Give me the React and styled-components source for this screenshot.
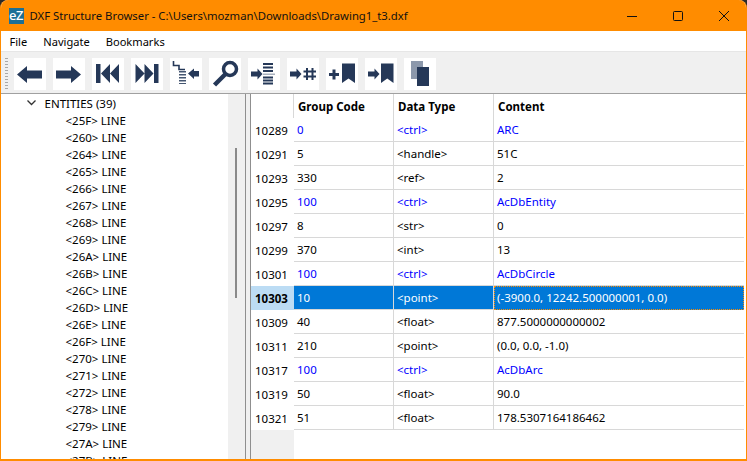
import React from 'react';
import styled, { createGlobalStyle } from 'styled-components';

const Global = createGlobalStyle`
  html, body { margin: 0; padding: 0; background: #2a2a2a; overflow: hidden; }
  #root { width: 747px; height: 461px; }
`;
const Win = styled.div`
  width: 747px; height: 461px; box-sizing: border-box; display: flex; flex-direction: column;
  background: #f0f0f0; border: solid #ff8c00; border-width: 0 1.5px 2px 1.5px; border-radius: 8px 8px 0 0;
  overflow: hidden; font-family: "Noto Sans", "Open Sans", sans-serif; font-size: 11.5px; color: #000;
`;
const TitleBar = styled.div`
  height: 31px; flex: none; background: #ff8c00; display: flex; align-items: center; padding: 0 1px 0 8px; margin: 0 -1.5px;
`;
const Logo = styled.div`
  width: 15px; height: 16px; background: #1c6f95; color: #fff; font-size: 13px; font-weight: 500; line-height: 15px;
  text-align: center; letter-spacing: -0.5px; margin-right: 6px; margin-left: 1px;
`;
const TitleText = styled.div` font-size: 11.3px; flex: 1; white-space: nowrap; color: #111; `;
const WinBtn = styled.div`
  width: 46px; height: 31px; display: flex; align-items: center; justify-content: center;
`;
const MenuBar = styled.div`
  height: 20px; flex: none; background: #fff; display: flex; align-items: center; padding-left: 8.5px; gap: 16px;
  border-bottom: 1px solid #e6e6e6;
`;
const MenuItem = styled.span` font-size: 11.1px; `;
const ToolBar = styled.div`
  height: 42px; flex: none; box-sizing: border-box; display: flex; align-items: center; padding: 2px 0 0 3.5px; gap: 7px;
  border-bottom: 1px solid #a0a0a0;
`;
const Grip = styled.div`
  width: 3px; height: 32px; margin-right: -1px;
  background-image: linear-gradient(#a8a8a8 50%, transparent 50%);
  background-size: 3px 3px;
`;
const ToolBtn = styled.div`
  width: 32px; height: 32px; background: #fff; flex: none;
  svg { display: block; }
`;
const Panes = styled.div` flex: 1; display: flex; min-height: 0; background: #f0f0f0; `;
const TreePane = styled.div`
  width: 243.5px; flex: none; display: flex; background: #fff; overflow: hidden; border-right: 1px solid #8f8f8f;
`;
const TreeList = styled.div` flex: 1; `;
const TreeRow = styled.div`
  height: 17px; display: flex; align-items: center; white-space: nowrap;
  padding-left: ${p => p.$indent}px;
  &:first-child { height: 18px; }
`;
const Chevron = styled.svg` width: 9px; height: 6px; margin-left: -18px; margin-right: 9px; `;
const TreeScroll = styled.div`
  width: 17px; flex: none; background: #f0f0f0; display: flex; justify-content: center;
`;
const Thumb = styled.div` width: 2px; height: 150px; margin-top: 54px; background: #8a8a8a; `;
const TablePane = styled.div`
  flex: 1; margin-left: 4.5px; background: #fff; border-left: 1px solid #8f8f8f; display: flex; flex-direction: column;
  overflow: hidden; padding-right: 2.5px;
`;
const Row = styled.div`
  display: grid; grid-template-columns: 43px 100px 100px 1fr; height: 24px; flex: none;
`;
const Head = styled.div`
  font-weight: 700; font-size: 11.5px; display: flex; align-items: center; padding-left: 4px;
  border-right: 1px solid #d8d8d8; background: #fff; white-space: nowrap; &:last-child { border-right: 0; }
`;
const RowHead = styled.div`
  display: flex; align-items: center; padding-left: 4px; padding-top: 1px; white-space: nowrap;
  background: ${p => p.$sel ? '#bcdcf4' : '#fff'}; font-weight: ${p => p.$sel ? 700 : 400};
`;
const Cell = styled.div`
  display: flex; align-items: center; padding: 0 0 0.5px 3px; white-space: nowrap; box-sizing: border-box;
  border-right: 1px solid #d8d8d8; border-bottom: 1px solid #d8d8d8;
  color: ${p => p.$sel ? '#fff' : p.$ctrl ? '#0000ff' : '#000'};
  background: ${p => p.$sel ? '#0078d7' : '#fff'};
  &:last-child { border-right: 0; }
`;
const FocusCell = styled(Cell)`
  border: 1px dotted #ff8c00; padding: 0 0 0.5px 2px;
  &:last-child { border-right: 1px dotted #ff8c00; }
`;
const Filler = styled.div` flex: 1; display: grid; grid-template-columns: 43px 1fr; `;
const FillerHead = styled.div` background: #f0f0f0; `;

const C = '#253858';
const Ico = ({ children }) => <svg width="32" height="32" viewBox="0 0 32 32">{children}</svg>;
const Arrow = ({ x = 3, w = 11.5, y = 16 }) => (
  <path fill={C} d={`M${x} ${y - 2.5}H${x + w - 5}V${y - 5.5}L${x + w} ${y}L${x + w - 5} ${y + 5.5}V${y + 2.5}H${x}Z`} />
);
const icons = [
  <Ico><path fill={C} d="M3 16.5L13 8V12.500H28V20.500H13V25Z" /></Ico>,
  <Ico><path fill={C} d="M28 16.500L18 8V12.500H3V20.500H18V25Z" /></Ico>,
  <Ico><path fill={C} d="M4 6H8.500V25H4ZM9 15.500L18 6V25ZM18 15.500L27 6V25Z" /></Ico>,
  <Ico><path fill={C} d="M27.500 6H23V25H27.500ZM22.500 15.500L13.500 6V25ZM13.500 15.500L4.500 6V25Z" /></Ico>,
  <Ico>
    <path fill="none" stroke={C} strokeWidth="1.600" d="M3.500 3V7.500H9V11.500H15" />
    <path fill={C} d="M9 13H16V14.500H9ZM9 16H16V17.500H9ZM9 19H16V20.500H9ZM9 22H16V23.500H9ZM9 25H16V26H9Z" opacity=".85" />
    <path fill={C} d="M18 15.500L24 10.500V13H29V18.500H24V21Z" />
  </Ico>,
  <Ico>
    <circle cx="21" cy="11" r="6.500" fill="none" stroke={C} strokeWidth="3.500" />
    <path fill="none" stroke={C} strokeWidth="4.500" d="M16.500 16L5.500 27" />
  </Ico>,
  <Ico>
    <Arrow />
    <path fill={C} d="M15 5H25V7H15ZM15 8.500H25V10.500H15ZM15 12H25V14H15ZM15 18.500H25V20.500H15ZM15 21.500H25V23.500H15ZM15 24.500H25V26.500H15Z" />
    <path fill="#a8b0bd" d="M15 15.500H27V17H15Z" />
  </Ico>,
  <Ico>
    <Arrow />
    <path fill={C} d="M19 10H21V22H19ZM24.500 10H26.500V22H24.500ZM16.500 12.500H29V14.500H16.500ZM16.500 17.500H29V19.500H16.500Z" />
  </Ico>,
  <Ico>
    <path fill={C} d="M6.500 11.500H9.500V15H13V18H9.500V21.500H6.500V18H3V15H6.500Z" />
    <path fill={C} d="M16 5.500H29V25L22.500 20.500L16 25Z" />
  </Ico>,
  <Ico>
    <Arrow />
    <path fill={C} d="M16 5.500H28.500V25L22.250 20.500L16 25Z" />
  </Ico>,
  <Ico>
    <path fill="#8c98ab" d="M7 3H19V21H7Z" />
    <path fill={C} d="M13 9H25V28H13Z" />
  </Ico>,
];

const tree = ['25F','260','264','265','266','267','268','269','26A','26B','26C','26D','26E','26F','270','271','272','278','279','27A','27B'];
const rows = [
  ['10289','0','<ctrl>','ARC',1],
  ['10291','5','<handle>','51C'],
  ['10293','330','<ref>','2'],
  ['10295','100','<ctrl>','AcDbEntity',1],
  ['10297','8','<str>','0'],
  ['10299','370','<int>','13'],
  ['10301','100','<ctrl>','AcDbCircle',1],
  ['10303','10','<point>','(-3900.0, 12242.500000001, 0.0)',0,1],
  ['10309','40','<float>','877.5000000000002'],
  ['10311','210','<point>','(0.0, 0.0, -1.0)'],
  ['10317','100','<ctrl>','AcDbArc',1],
  ['10319','50','<float>','90.0'],
  ['10321','51','<float>','178.5307164186462'],
];

export default function App() {
  return (
    <Win>
      <Global />
      <TitleBar>
        <Logo>eZ</Logo>
        <TitleText>DXF Structure Browser - C:\Users\mozman\Downloads\Drawing1_t3.dxf</TitleText>
        <WinBtn><svg width="10" height="10"><path d="M0 5.500H10" stroke="#111" /></svg></WinBtn>
        <WinBtn><svg width="10" height="10"><rect x=".5" y=".5" width="9" height="9" rx="1" fill="none" stroke="#111" /></svg></WinBtn>
        <WinBtn><svg width="10" height="10"><path d="M0 0L10 10M10 0L0 10" stroke="#111" /></svg></WinBtn>
      </TitleBar>
      <MenuBar>
        <MenuItem>File</MenuItem>
        <MenuItem>Navigate</MenuItem>
        <MenuItem>Bookmarks</MenuItem>
      </MenuBar>
      <ToolBar>
        <Grip />
        {icons.map((ic, i) => <ToolBtn key={i}>{ic}</ToolBtn>)}
      </ToolBar>
      <Panes>
        <TreePane>
          <TreeList>
            <TreeRow $indent={43.5}>
              <Chevron viewBox="0 0 9 6"><path d="M.5 .5L4.500 4.500L8.500 .5" fill="none" stroke="#333" strokeWidth="1.300" /></Chevron>
              ENTITIES (39)
            </TreeRow>
            {tree.map(t => <TreeRow key={t} $indent={64.5}>{`<${t}> LINE`}</TreeRow>)}
          </TreeList>
          <TreeScroll><Thumb /></TreeScroll>
        </TreePane>
        <TablePane>
          <Row>
            <Head />
            <Head>Group Code</Head>
            <Head>Data Type</Head>
            <Head>Content</Head>
          </Row>
          {rows.map(([n, g, d, c, ctrl, sel]) => (
            <Row key={n}>
              <RowHead $sel={sel}>{n}</RowHead>
              <Cell $ctrl={ctrl} $sel={sel}>{g}</Cell>
              <Cell $ctrl={ctrl} $sel={sel}>{d}</Cell>
              {sel ? <FocusCell $sel>{c}</FocusCell> : <Cell $ctrl={ctrl}>{c}</Cell>}
            </Row>
          ))}
          <Filler><FillerHead /></Filler>
        </TablePane>
      </Panes>
    </Win>
  );
}
